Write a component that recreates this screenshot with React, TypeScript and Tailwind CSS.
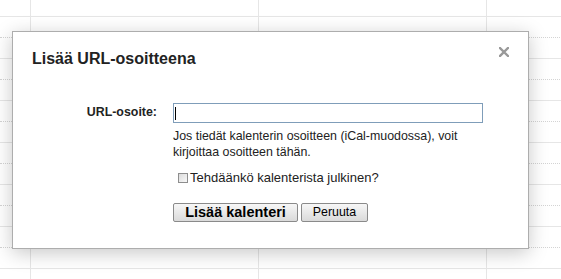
import { useState } from 'react'

const font = { fontFamily: '"Liberation Sans", Arial, sans-serif' }

function GridBackground() {
  const rows = Array.from({ length: 7 })
  const cells = [0, 1, 2]

  return (
    <div className="flex flex-col w-[800px]">
      <div className="flex h-[16px]">
        <div className="w-[30px] shrink-0" />
        {cells.map((c) => (
          <div key={c} className="w-[228px] shrink-0 border-l border-[#e6e6e6]" />
        ))}
      </div>
      {rows.map((_, i) => (
        <div key={i} className="flex h-[42px] border-t border-[#e6e6e6]">
          <div className="w-[30px] shrink-0">
            <div className="h-[21px] border-b border-dotted border-[#d4d4d4]" />
          </div>
          {cells.map((c) => (
            <div key={c} className="w-[228px] shrink-0 border-l border-[#e6e6e6]">
              <div className="h-[21px] border-b border-dotted border-[#d4d4d4]" />
            </div>
          ))}
        </div>
      ))}
    </div>
  )
}

function CloseIcon() {
  return (
    <svg width="10" height="10" viewBox="0 0 10 10" className="block">
      <path d="M1 1 L9 9 M9 1 L1 9" stroke="#999" strokeWidth="2.4" strokeLinecap="square" />
    </svg>
  )
}

export default function App() {
  const [isPublic, setIsPublic] = useState(false)

  return (
    <div className="relative w-[561px] h-[279px] overflow-hidden bg-white" style={font}>
      <GridBackground />

      <div className="absolute left-[12px] top-[31px] w-[517px] h-[218px] bg-white border border-[#adadad] shadow-[0_4px_18px_rgba(0,0,0,0.22)]">
        <div className="flex justify-between items-start pt-[15px] pl-[19px] pr-[19px]">
          <h2 className="mt-[3px] text-[16px] leading-[18px] font-bold text-[#222]">
            Lisää URL-osoitteena
          </h2>
          <button className="w-[10px] h-[10px]">
            <CloseIcon />
          </button>
        </div>

        <div className="mt-[35px] grid grid-cols-[144px_1fr] gap-x-[16px]">
          <label className="text-right text-[12.4px] leading-[19px] font-bold text-[#222]">
            URL-osoite:
          </label>
          <div className="flex flex-col">
            <div className="w-[310px] h-[20px] border border-[#7f9db9] bg-white flex items-center">
              <span className="ml-[1px] w-px h-[13px] bg-black" />
            </div>
            <p className="mt-[5px] text-[12.4px] leading-[16px] text-[#222]">
              Jos tiedät kalenterin osoitteen (iCal-muodossa), voit
              <br />
              kirjoittaa osoitteen tähän.
            </p>
            <label className="mt-[10px] flex items-center h-[16px] text-[13px] leading-[16px] text-[#222]">
              <span
                onClick={() => setIsPublic(!isPublic)}
                className="ml-[5px] mr-[2px] w-[10px] h-[10px] border border-[#8e8e8e] bg-gradient-to-br from-[#dcdcdc] to-[#f8f8f8]"
              />
              Tehdäänkö kalenterista julkinen?
            </label>
            <div className="mt-[17px] flex gap-[3px]">
              <button className="w-[125px] h-[19px] rounded-[2px] border border-[#8a8a8a] bg-gradient-to-b from-[#f7f7f7] to-[#dadada] text-[14.5px] leading-[17px] font-bold text-black">
                Lisää kalenteri
              </button>
              <button className="w-[67px] h-[19px] rounded-[2px] border border-[#8a8a8a] bg-gradient-to-b from-[#f7f7f7] to-[#dadada] text-[12.4px] leading-[17px] text-black">
                Peruuta
              </button>
            </div>
          </div>
        </div>
      </div>
    </div>
  )
}
